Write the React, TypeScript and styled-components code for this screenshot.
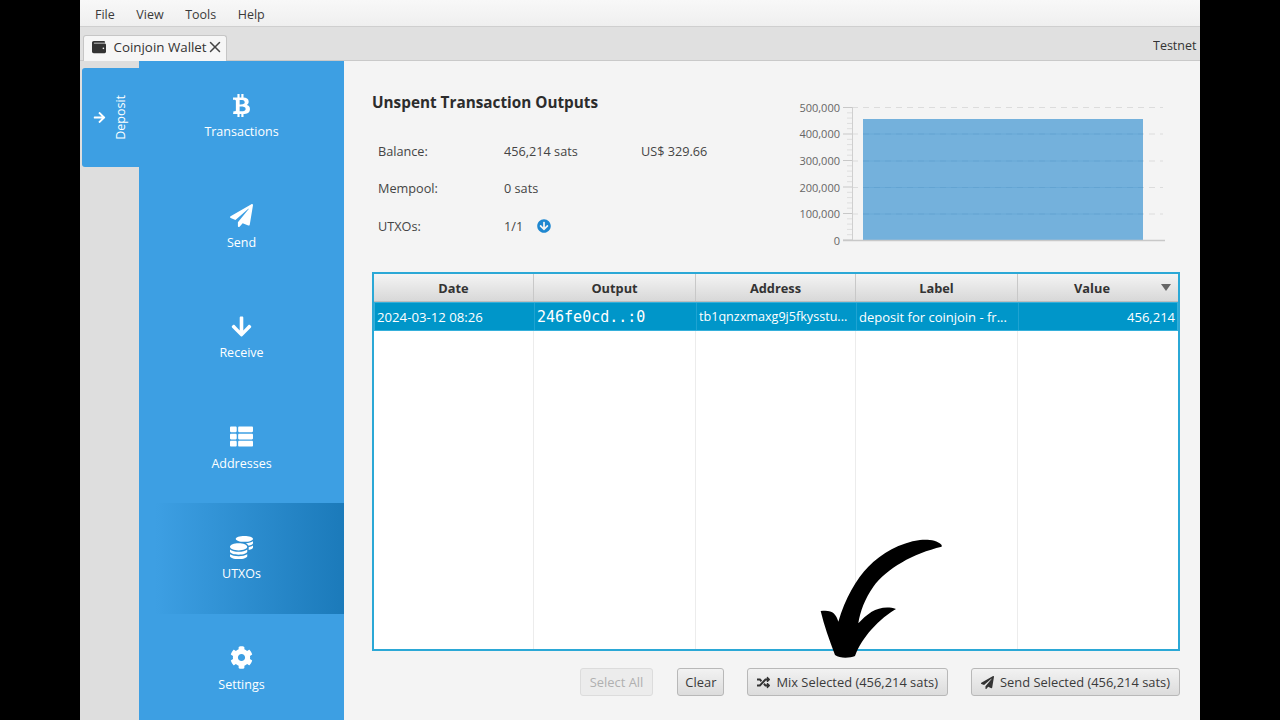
import styled, { createGlobalStyle } from "styled-components";
import {
  FaArrowCircleDown,
  FaArrowDown,
  FaArrowRight,
  FaBtc,
  FaCoins,
  FaCog,
  FaPaperPlane,
  FaRandom,
  FaThList,
  FaWallet,
} from "react-icons/fa";
import { FiX } from "react-icons/fi";

const GlobalStyle = createGlobalStyle`
  html, body {
    margin: 0;
    background: #000;
  }
  * {
    box-sizing: border-box;
  }
`;

const navItems = [
  { label: "Transactions", icon: <FaBtc /> },
  { label: "Send", icon: <FaPaperPlane /> },
  { label: "Receive", icon: <FaArrowDown /> },
  { label: "Addresses", icon: <FaThList /> },
  { label: "UTXOs", icon: <FaCoins />, active: true },
  { label: "Settings", icon: <FaCog /> },
];

const columns = ["Date", "Output", "Address", "Label", "Value"];
const ticks = [
  { label: "500,000", y: 107.5 },
  { label: "400,000", y: 134 },
  { label: "300,000", y: 161 },
  { label: "200,000", y: 187.5 },
  { label: "100,000", y: 214 },
  { label: "0", y: 240.5 },
];

const Chart = () => (
  <ChartSvg viewBox="0 0 390 155" aria-label="UTXO chart">
    {ticks.slice(0, 5).map((t) => (
      <line key={t.y} x1="62" x2="373" y1={t.y - 95} y2={t.y - 95} stroke="#dcdcdc" strokeDasharray="6 5" />
    ))}
    <rect x="73" y="24" width="280" height="121" fill="#3d94d2" opacity="0.7" />
    {ticks.slice(1, 5).map((t) => (
      <line key={t.y} x1="73" x2="353" y1={t.y - 95} y2={t.y - 95} stroke="#4f97cc" opacity="0.3" />
    ))}
    <line x1="62.5" x2="62.5" y1="12" y2="146" stroke="#cfcfcf" />
    {Array.from({ length: 26 }, (_, i) => (
      <line
        key={i}
        x1={i % 5 === 0 ? 53 : 57}
        x2="62"
        y1={12.5 + i * 5.3}
        y2={12.5 + i * 5.3}
        stroke={i % 5 === 0 ? "#c8c8c8" : "#dedede"}
      />
    ))}
    <line x1="53" x2="375" y1="145.5" y2="145.5" stroke="#c8c8c8" strokeWidth="1.5" />
    {ticks.map((t) => (
      <text key={t.label} x="50" y={t.y - 91} textAnchor="end" fontSize="11" fill="#666">
        {t.label}
      </text>
    ))}
  </ChartSvg>
);

const CurvedArrow = () => (
  <ArrowOverlay viewBox="0 0 480 420" aria-hidden="true">
    <path d="M425 45 C410 30 385 28 360 30 C300 38 245 70 205 110 C170 145 135 205 115 275 C108 250 95 238 62 243 C72 285 88 330 105 375 C120 386 150 384 165 378 C175 350 195 320 215 298 C240 270 265 250 288 237 C260 228 235 235 215 245 C200 255 185 268 175 280 C180 245 195 205 220 170 C260 115 340 70 425 50 Z" fill="#000" />
  </ArrowOverlay>
);

export default function App() {
  return (
    <>
      <GlobalStyle />
      <Screen>
        <MenuBar>
          <MenuItem>File</MenuItem>
          <MenuItem>View</MenuItem>
          <MenuItem>Tools</MenuItem>
          <MenuItem>Help</MenuItem>
        </MenuBar>
        <TabStrip>
          <WalletTab>
            <FaWallet size={14} color="#333" />
            <span>Coinjoin Wallet</span>
            <CloseIcon size={18} color="#444" />
          </WalletTab>
          <Network>Testnet</Network>
        </TabStrip>
        <Body>
          <Rail>
            <DepositTab>
              <FaArrowRight size={13} />
              <DepositLabel>Deposit</DepositLabel>
            </DepositTab>
          </Rail>
          <Sidebar>
            {navItems.map((item) => (
              <NavItem key={item.label} $active={item.active}>
                <NavIcon>{item.icon}</NavIcon>
                <span>{item.label}</span>
              </NavItem>
            ))}
          </Sidebar>
          <Main>
            <TopRow>
              <Summary>
                <Title>Unspent Transaction Outputs</Title>
                <Stats>
                  <span>Balance:</span>
                  <span>456,214 sats</span>
                  <span>US$ 329.66</span>
                  <span>Mempool:</span>
                  <span>0 sats</span>
                  <span />
                  <span>UTXOs:</span>
                  <UtxoCount>
                    1/1
                    <FaArrowCircleDown size={14} color="#1e87d0" />
                  </UtxoCount>
                  <span />
                </Stats>
              </Summary>
              <Chart />
            </TopRow>
            <Table>
              <HeaderRow>
                {columns.map((c) => (
                  <HeaderCell key={c} $sorted={c === "Value"}>
                    {c}
                    {c === "Value" && <SortMark />}
                  </HeaderCell>
                ))}
              </HeaderRow>
              <SelectedRow>
                <Cell $size={13.2}>2024-03-12 08:26</Cell>
                <MonoCell>246fe0cd..:0</MonoCell>
                <Cell $size={12.6}>tb1qnzxmaxg9j5fkysstu...</Cell>
                <Cell $size={13}>deposit for coinjoin - fr...</Cell>
                <ValueCell $size={13}>456,214</ValueCell>
              </SelectedRow>
              <EmptyRows>
                {columns.map((c) => (
                  <EmptyColumn key={c} />
                ))}
              </EmptyRows>
            </Table>
            <Actions>
              <ActionButton disabled>Select All</ActionButton>
              <ActionButton $compact>Clear</ActionButton>
              <ActionButton>
                <FaRandom size={13} color="#333" />
                Mix Selected (456,214 sats)
              </ActionButton>
              <ActionButton>
                <FaPaperPlane size={13} color="#333" />
                Send Selected (456,214 sats)
              </ActionButton>
            </Actions>
          </Main>
        </Body>
        <CurvedArrow />
      </Screen>
    </>
  );
}

const Screen = styled.div`
  position: relative;
  display: flex;
  flex-direction: column;
  width: 1120px;
  height: 720px;
  margin: 0 auto;
  overflow: hidden;
  background: #f4f4f4;
  font-family: "Open Sans", "Noto Sans", sans-serif;
  font-size: 12.7px;
  color: #333;
`;

const MenuBar = styled.div`
  display: flex;
  align-items: center;
  gap: 21.5px;
  flex: 0 0 27px;
  padding: 3px 14px 0 15px;
  background: linear-gradient(#f8f8f8, #efefef);
  border-bottom: 1px solid #cfcfcf;
`;

const MenuItem = styled.span`
  font-size: 12.5px;
  color: #3a3a3a;
`;

const TabStrip = styled.div`
  display: flex;
  align-items: flex-end;
  justify-content: space-between;
  flex: 0 0 34px;
  padding-left: 3px;
  background: #e0e0e0;
  border-bottom: 1px solid #c9c9c9;
`;

const WalletTab = styled.div`
  display: flex;
  align-items: center;
  gap: 7.5px;
  height: 26px;
  width: 144px;
  padding: 0 0 3px 8px;
  margin-bottom: -1px;
  background: #f6f6f6;
  border: 1px solid #c6c6c6;
  border-bottom: none;
  border-radius: 3px 3px 0 0;
  font-size: 13.35px;
  white-space: nowrap;
`;

const CloseIcon = styled(FiX)`
  flex-shrink: 0;
  margin-left: -8.5px;
  stroke-width: 2;
`;

const Network = styled.span`
  width: 47px;
  margin-bottom: 6px;
  overflow: hidden;
  font-size: 12.5px;
  white-space: nowrap;
`;

const Body = styled.div`
  display: flex;
  flex: 1;
  min-height: 0;
`;

const Rail = styled.div`
  flex: 0 0 59px;
  padding: 7px 0 0 2px;
  background: #dedede;
`;

const DepositTab = styled.div`
  display: flex;
  align-items: center;
  gap: 6px;
  height: 99px;
  padding-left: 11px;
  background: #3d9fe3;
  border-radius: 3px 0 0 3px;
  color: #fff;
`;

const DepositLabel = styled.span`
  writing-mode: vertical-rl;
  transform: rotate(180deg);
  font-size: 12.5px;
`;

const Sidebar = styled.nav`
  display: grid;
  grid-auto-rows: 110.5px;
  flex: 0 0 205px;
  background: #3d9fe3;
`;

const NavItem = styled.div<{ $active?: boolean }>`
  display: flex;
  flex-direction: column;
  align-items: center;
  justify-content: center;
  gap: 6.5px;
  padding-top: 1.5px;
  background: ${(p) => (p.$active ? "linear-gradient(90deg, #3d9fe3 8%, #1b7aba 100%)" : "transparent")};
  color: #fff;
  font-size: 12.5px;
`;

const NavIcon = styled.span`
  display: flex;
  font-size: 23px;
`;

const Main = styled.main`
  display: flex;
  flex-direction: column;
  flex: 1;
  min-width: 0;
  padding: 30px 20px 0 28px;
`;

const TopRow = styled.div`
  display: flex;
  justify-content: space-between;
  height: 181px;
  padding-top: 4px;
`;

const Summary = styled.div`
  display: flex;
  flex-direction: column;
  margin-top: -4px;
`;

const Title = styled.h1`
  margin: 0;
  font-size: 15.3px;
  font-weight: 700;
  line-height: 22px;
  color: #2c2c2c;
`;

const Stats = styled.div`
  display: grid;
  grid-template-columns: 126px 137px 90px;
  grid-auto-rows: 37.5px;
  align-items: center;
  margin: 19px 0 0 6px;
  color: #444;
`;

const UtxoCount = styled.span`
  display: flex;
  align-items: center;
  gap: 14px;
`;

const ChartSvg = styled.svg`
  flex: 0 0 390px;
  width: 390px;
  height: 155px;
  font-family: "Open Sans", sans-serif;
`;

const Table = styled.div`
  display: flex;
  flex-direction: column;
  height: 379px;
  background: #fff;
  border: 2px solid #2ba8d6;
`;

const tableColumns = "160px 162px 160px 162px 160px";

const HeaderRow = styled.div`
  display: grid;
  grid-template-columns: ${tableColumns};
  height: 28px;
  background: linear-gradient(#f4f4f4, #d8d8d8);
  border-bottom: 1px solid #bdbdbd;
`;

const HeaderCell = styled.div<{ $sorted?: boolean }>`
  position: relative;
  display: flex;
  align-items: center;
  justify-content: center;
  padding-right: ${(p) => (p.$sorted ? "12px" : "0")};
  border-right: ${(p) => (p.$sorted ? "none" : "1px solid #c8c8c8")};
  font-size: 12.8px;
  font-weight: 700;
  color: #333;
`;

const SortMark = styled.span`
  position: absolute;
  right: 7px;
  top: 10px;
  border-left: 5px solid transparent;
  border-right: 5px solid transparent;
  border-top: 7px solid #666;
`;

const SelectedRow = styled.div`
  display: grid;
  grid-template-columns: ${tableColumns};
  height: 29px;
  background: #0096c9;
  border: 1px solid #35b0db;
  color: #fff;
`;

const Cell = styled.div<{ $size?: number }>`
  display: flex;
  align-items: center;
  padding: 0 2px;
  overflow: hidden;
  border-right: 1px solid #1fa3d2;
  font-size: ${(p) => p.$size ?? 13}px;
  white-space: nowrap;
`;

const MonoCell = styled(Cell)`
  font-family: "DejaVu Sans Mono", monospace;
  font-size: 15px;
`;

const ValueCell = styled(Cell)`
  justify-content: flex-end;
  padding-right: 4px;
  border-right: none;
`;

const EmptyRows = styled.div`
  display: grid;
  grid-template-columns: ${tableColumns};
  flex: 1;
`;

const EmptyColumn = styled.div`
  border-right: 1px solid #ececec;
  &:last-child {
    border-right: none;
  }
`;

const Actions = styled.div`
  display: flex;
  justify-content: flex-end;
  gap: 23px;
  margin-top: 17px;
`;

const ActionButton = styled.button<{ $compact?: boolean }>`
  display: flex;
  align-items: center;
  gap: 6px;
  height: 28px;
  padding: 0 ${(p) => (p.$compact ? "7px" : "9px")};
  background: linear-gradient(#f2f2f2, #dcdcdc);
  border: 1px solid #b8b8b8;
  border-radius: 3px;
  font-family: "Open Sans", "Noto Sans", sans-serif;
  font-size: 12.9px;
  color: #3a3a3a;
  &:disabled {
    margin-right: 1px;
    background: #ececec;
    border-color: #dcdcdc;
    color: #b0b0b0;
  }
`;

const ArrowOverlay = styled.svg`
  position: absolute;
  left: 720px;
  top: 530px;
  width: 160px;
  height: 140px;
`;
